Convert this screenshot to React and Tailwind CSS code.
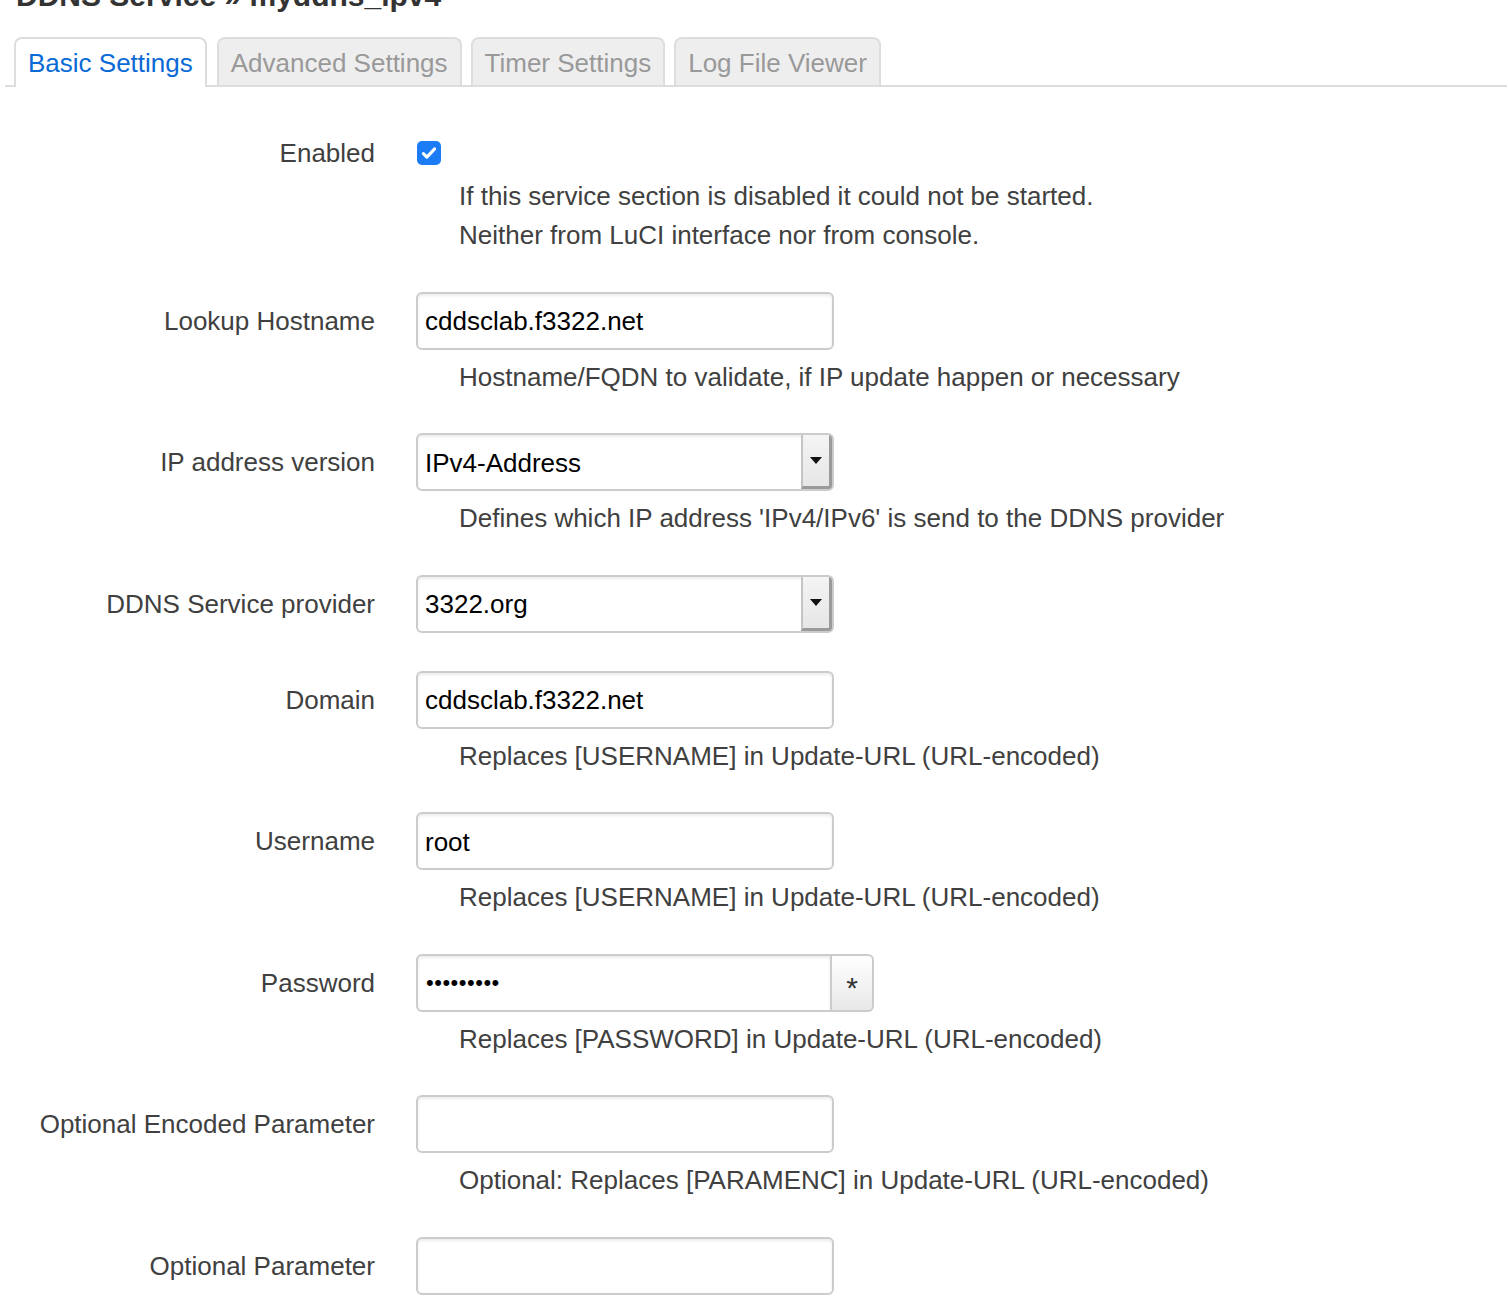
import React from "react";

const TABS = ["Basic Settings", "Advanced Settings", "Timer Settings", "Log File Viewer"];

const FIELDS = [
  {
    label: "Enabled",
    type: "checkbox",
    help: [
      "If this service section is disabled it could not be started.",
      "Neither from LuCI interface nor from console.",
    ],
  },
  {
    label: "Lookup Hostname",
    type: "text",
    value: "cddsclab.f3322.net",
    help: ["Hostname/FQDN to validate, if IP update happen or necessary"],
  },
  {
    label: "IP address version",
    type: "select",
    value: "IPv4-Address",
    help: ["Defines which IP address 'IPv4/IPv6' is send to the DDNS provider"],
  },
  { label: "DDNS Service provider", type: "select", value: "3322.org" },
  {
    label: "Domain",
    type: "text",
    value: "cddsclab.f3322.net",
    help: ["Replaces [USERNAME] in Update-URL (URL-encoded)"],
  },
  {
    label: "Username",
    type: "text",
    value: "root",
    help: ["Replaces [USERNAME] in Update-URL (URL-encoded)"],
  },
  {
    label: "Password",
    type: "password",
    help: ["Replaces [PASSWORD] in Update-URL (URL-encoded)"],
  },
  {
    label: "Optional Encoded Parameter",
    type: "text",
    value: "",
    help: ["Optional: Replaces [PARAMENC] in Update-URL (URL-encoded)"],
  },
  { label: "Optional Parameter", type: "text", value: "" },
];

const boxCls =
  "h-[58px] rounded-[6px] border-2 border-[#cccccc] bg-white shadow-[inset_0_2px_3px_rgba(0,0,0,0.08)]";

/* ---------- widgets ---------- */
const Checkbox = () => (
  <div className="flex h-[30px] items-center pl-[1px]">
    <div className="flex h-[24px] w-[24px] items-center justify-center rounded-[5px] bg-[#1b7cf6]">
      <svg width="18" height="18" viewBox="0 0 16 16" fill="none">
        <path d="M3 8.6l3.1 3.1L13 4.4" stroke="white" strokeWidth="2.8" strokeLinecap="round" strokeLinejoin="round" />
      </svg>
    </div>
  </div>
);

const TextBox = ({ value }) => (
  <div className={`${boxCls} flex w-[418px] items-center px-[7px] pt-[2px] text-[26px] text-black`}>
    {value}
  </div>
);

const SelectBox = ({ value }) => (
  <div className={`${boxCls} flex w-[418px] items-center overflow-hidden text-[26px] text-black`}>
    <span className="flex-1 pl-[7px] pt-[2px]">{value}</span>
    <div className="flex h-full w-[31px] items-center justify-center border-l-2 border-[#c4c4c4] border-r-[3px] border-b-[3px] border-r-[#9a9a9a] border-b-[#9a9a9a] bg-gradient-to-b from-[#f4f4f4] to-[#e6e6e6]">
      <svg width="12" height="7" viewBox="0 0 12 7">
        <path d="M0 0h12L6 7z" fill="#111" />
      </svg>
    </div>
  </div>
);

const PasswordBox = () => (
  <div className="flex">
    <div className="flex h-[58px] w-[416px] items-center rounded-l-[6px] border-2 border-[#cccccc] bg-white px-[8px] text-[22px] tracking-[0.5px] text-black shadow-[inset_0_2px_3px_rgba(0,0,0,0.08)]">
      •••••••••
    </div>
    <div className="flex h-[58px] w-[42px] items-center justify-center rounded-r-[6px] border-2 border-l-0 border-[#cccccc] bg-gradient-to-b from-white to-[#e8e8e8] pt-[10px] text-[30px] text-[#333]">
      *
    </div>
  </div>
);

const Field = ({ field }) => {
  if (field.type === "checkbox") return <Checkbox />;
  if (field.type === "select") return <SelectBox value={field.value} />;
  if (field.type === "password") return <PasswordBox />;
  return <TextBox value={field.value} />;
};

/* ---------- page ---------- */
export default function App() {
  return (
    <div className="min-h-[1304px] overflow-hidden bg-white font-['Liberation_Sans',Arial,sans-serif] text-[#404040]">
      <h2 className="-mt-[22px] pl-[16px] text-[30px] font-bold leading-[36px] text-[#333]">
        DDNS Service » myddns_ipv4
      </h2>

      {/* tab strip */}
      <ul className="ml-[5px] mr-[1px] mt-[23px] flex items-end gap-[9px] border-b-2 border-[#dddddd] pl-[9px]">
        {TABS.map((tab, i) =>
          i === 0 ? (
            <li
              key={tab}
              className="-mb-[2px] mr-[1px] rounded-t-[8px] border-2 border-b-0 border-[#dddddd] bg-white px-[12px] pb-[9px] pt-[9px] text-[26px] leading-[30px] text-[#0a6ad6]"
            >
              {tab}
            </li>
          ) : (
            <li
              key={tab}
              className="rounded-t-[8px] border-2 border-b-0 border-[#dddddd] bg-[#eeeeee] px-[12px] pb-[7px] pt-[9px] text-[26px] leading-[30px] text-[#999999]"
            >
              {tab}
            </li>
          )
        )}
      </ul>

      {/* form */}
      <div className="mt-[51px] flex flex-col gap-[36.5px]">
        {FIELDS.map((f) => (
          <div key={f.label} className={`flex gap-[41px] ${f.help ? "" : "pb-[1.5px]"}`}>
            <div
              className={`w-[375px] shrink-0 text-right text-[26px] ${
                f.type === "checkbox" ? "leading-[30px]" : "leading-[58px]"
              }`}
            >
              {f.label}
            </div>
            <div className="flex flex-col">
              <Field field={f} />
              {f.help && (
                <div className={`${f.type === "checkbox" ? "mt-[9px]" : "mt-[8px]"} pl-[43px] text-[26px] leading-[39px]`}>
                  {f.help.map((line) => (
                    <div key={line}>{line}</div>
                  ))}
                </div>
              )}
            </div>
          </div>
        ))}
      </div>
    </div>
  );
}
